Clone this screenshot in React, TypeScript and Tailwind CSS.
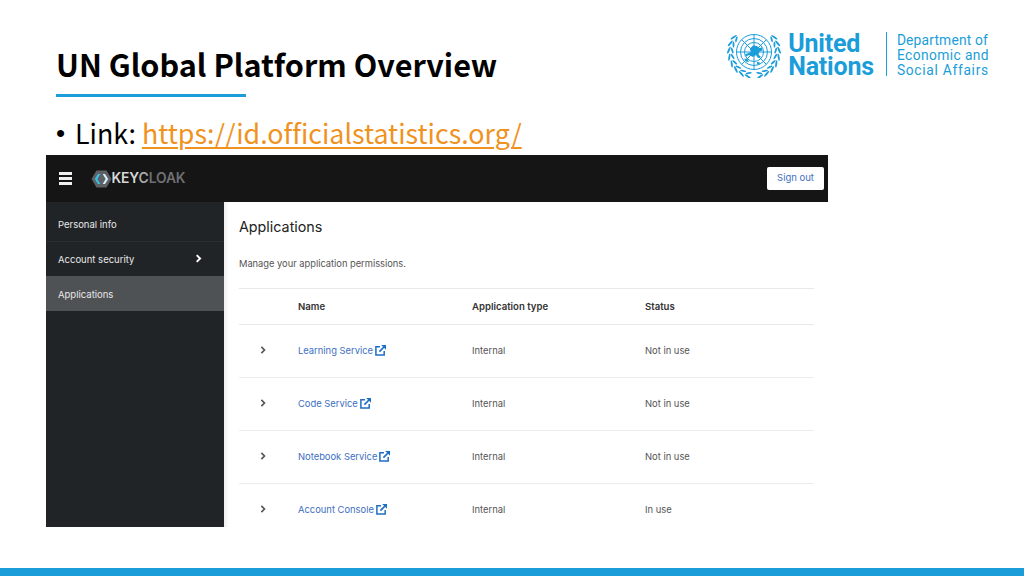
import React from "react";

const UI = "font-['Inter',sans-serif]";

function Wreath() {
  const leaves: { x: number; y: number; rot: number; ry: number }[] = [];
  for (let i = 0; i < 8; i++) {
    const deg = 14 + i * 16;
    const t = (deg * Math.PI) / 180;
    leaves.push({ x: 27 + 25.2 * Math.sin(t), y: 22 + 25.2 * Math.cos(t), rot: -90 - deg - 20, ry: 3.7 });
    leaves.push({ x: 27 + 21.8 * Math.sin(t), y: 22 + 21.8 * Math.cos(t), rot: -90 - deg + 20, ry: 3.1 });
  }
  return (
    <g fill="#1b9dd9">
      {leaves.map((l, i) => (
        <ellipse key={i} cx={l.x} cy={l.y} rx="0.95" ry={l.ry} transform={`rotate(${l.rot} ${l.x} ${l.y})`} />
      ))}
    </g>
  );
}

function Emblem() {
  return (
    <svg width="54" height="48" viewBox="0 0 54 48" className="shrink-0">
      <g fill="none" stroke="#1b9dd9" strokeWidth="1">
        <circle cx="27" cy="22" r="17.500" />
        <circle cx="27" cy="22" r="13.500" />
        <circle cx="27" cy="22" r="9.500" />
        <path d="M27 4.500V39.500M9.500 22H44.500M14.600 9.600L39.400 34.400M39.400 9.600L14.600 34.400" />
      </g>
      <path d="M23 18.500l3-3 4 .5 2 2 3-.5 .5 3-3 1-1 3 2.500 2.500-3 1-2-3-3 2-4-2-3 1.500-1-2 3.500-1.500 2.500-1-1-2.500z" fill="#1b9dd9" />
      <path d="M17 28.500l3.500 .5 1.500 3-3-.5zM30 32l3 .5-.5 2-2.500-.5z" fill="#1b9dd9" />
      <Wreath />
      <g transform="translate(54 0) scale(-1 1)">
        <Wreath />
      </g>
    </svg>
  );
}

function Logo() {
  return (
    <div className="flex items-center mt-[10px] mr-[35px] text-[#1b9dd9] font-['Roboto',sans-serif]">
      <Emblem />
      <div className="ml-[7px] mt-[3px] text-[25px] leading-[22.5px] font-bold tracking-[-0.2px]">
        <div>United</div>
        <div>Nations</div>
      </div>
      <div className="w-px h-[44px] bg-[#1b9dd9] ml-[12px] mr-[10px]" />
      <div className="mt-[2px] text-[13.8px] leading-[15px] tracking-[0.18px]">
        <div>Department of</div>
        <div className="tracking-[0.4px]">Economic and</div>
        <div className="tracking-[0.7px]">Social Affairs</div>
      </div>
    </div>
  );
}

function Chevron({ className }: { className: string }) {
  return (
    <svg viewBox="0 0 10 10" className={className} fill="none" stroke="currentColor" strokeWidth="2.1">
      <path d="M3 1.200L6.800 5L3 8.800" />
    </svg>
  );
}

function External() {
  return (
    <svg width="11" height="11" viewBox="0 0 11 11" className="ml-[2px] mb-[1px]" fill="none" stroke="#1f6fc4" strokeWidth="1.500">
      <path d="M5 1.800H.9V10.100H9.200V6" />
      <path d="M4.400 6.600L9 2" strokeWidth="1.700" />
      <path d="M6.200 0H11V4.800Z" fill="#1f6fc4" stroke="none" />
    </svg>
  );
}

const rows = [
  ["Learning Service", "Not in use"],
  ["Code Service", "Not in use"],
  ["Notebook Service", "Not in use"],
  ["Account Console", "In use"],
];

function Keycloak() {
  return (
    <div className="flex items-center ml-[19px]">
      <svg width="21" height="18" viewBox="0 0 21 18">
        <path d="M5.500 .5H15.500L20.500 9L15.500 17.500H5.500L.5 9Z" fill="#5d6064" />
        <path d="M7 4L3.800 9L7 14H9.300L6.300 9L9.300 4Z" fill="#35c3ea" />
        <path d="M14 4L17.200 9L14 14H11.700L14.700 9L11.700 4Z" fill="#d8f1fa" />
      </svg>
      <span className="text-[13.8px] font-semibold tracking-[-0.1px] text-[#6e7073] ml-[-0.5px]">
        <span className="text-[#d8d8d8]">KEY</span>
        <span className="text-[#a8a8a8]">C</span>LOAK
      </span>
    </div>
  );
}

function Screenshot() {
  return (
    <div className={`ml-[46px] mt-[2px] w-[782px] h-[372px] flex flex-col ${UI}`}>
      <div className="h-[47px] bg-[#151515] flex items-center shrink-0">
        <div className="ml-[13px] w-[13px] flex flex-col gap-[2.5px]">
          <div className="h-[2.5px] bg-[#f0f0f0]" />
          <div className="h-[2.5px] bg-[#f0f0f0]" />
          <div className="h-[2.5px] bg-[#f0f0f0]" />
        </div>
        <Keycloak />
        <button className="ml-auto mr-[4px] w-[57px] h-[23px] bg-white rounded-[2px] text-[9.5px] text-[#3d6fc2]">Sign out</button>
      </div>
      <div className="flex flex-1 min-h-0">
        <div className="w-[178px] bg-[#212427] text-[9.5px] text-[#e8e8e8] shrink-0">
          <div className="h-[40px] flex items-center pt-[7px] pl-[12px] border-b border-[#2b2e31]">Personal info</div>
          <div className="h-[34px] flex items-center pt-[3px] pl-[12px] pr-[21px] justify-between">
            Account security
            <Chevron className="w-[9px] h-[9px] mb-[4px] text-white" />
          </div>
          <div className="h-[35px] flex items-center pt-[3px] pl-[12px] bg-[#4f5255]">Applications</div>
        </div>
        <div className="flex-1 bg-white shadow-[inset_5px_0_4px_-3px_rgba(0,0,0,0.08)] pl-[15px] pr-[14px] overflow-hidden">
          <h1 className="mt-[14px] text-[14.3px] leading-[21px] text-[#222]">Applications</h1>
          <p className="mt-[20px] text-[9.3px] leading-[14px] text-[#555]">Manage your application permissions.</p>
          <div className="mt-[17px] border-t border-[#e8e8e8]">
            <div className="h-[36px] flex items-center pt-[1px] border-b border-[#e8e8e8] text-[9.6px] font-semibold text-[#333]">
              <div className="w-[59px]" />
              <div className="w-[174px]">Name</div>
              <div className="w-[173px]">Application type</div>
              <div>Status</div>
            </div>
            {rows.map(([name, status]) => (
              <div key={name} className="h-[53px] shrink-0 flex items-center text-[9.4px] text-[#555] border-b border-[#ececec]">
                <div className="w-[59px] pl-[20px]">
                  <Chevron className="w-[8px] h-[8px] mb-[2px] text-[#555]" />
                </div>
                <div className="w-[174px] flex items-center text-[#3d6fc2]">
                  {name}
                  <External />
                </div>
                <div className="w-[173px]">Internal</div>
                <div>{status}</div>
              </div>
            ))}
          </div>
        </div>
      </div>
    </div>
  );
}

export default function App() {
  return (
    <div className="w-[1024px] h-[576px] bg-white flex flex-col overflow-hidden font-['Noto_Sans_CJK_SC','Noto_Sans',sans-serif] [font-variant-ligatures:none]">
      <div className="flex justify-between items-start h-[94px]">
        <div className="ml-[56px] mt-[43px] text-[30.6px] leading-[43px] font-bold text-black">UN Global Platform Overview</div>
        <div className="mt-[20px]"><Logo /></div>
      </div>
      <div className="ml-[56px] w-[190px] h-[3px] bg-[#1b9dd9] shrink-0" />
      <div className="ml-[56px] mt-[16px] h-[40px] flex items-center text-[26.8px] leading-[40px] text-black whitespace-nowrap">
        <span className="w-[19px] text-[26px] font-['Liberation_Sans',sans-serif]">•</span>
        <span>Link:&nbsp;</span>
        <span className="text-[#f0921e] underline decoration-[1.5px] underline-offset-[3px]">https://id.officialstatistics.org/</span>
      </div>
      <Screenshot />
      <div className="mt-auto h-[8px] bg-[#1b9dd9]" />
    </div>
  );
}
